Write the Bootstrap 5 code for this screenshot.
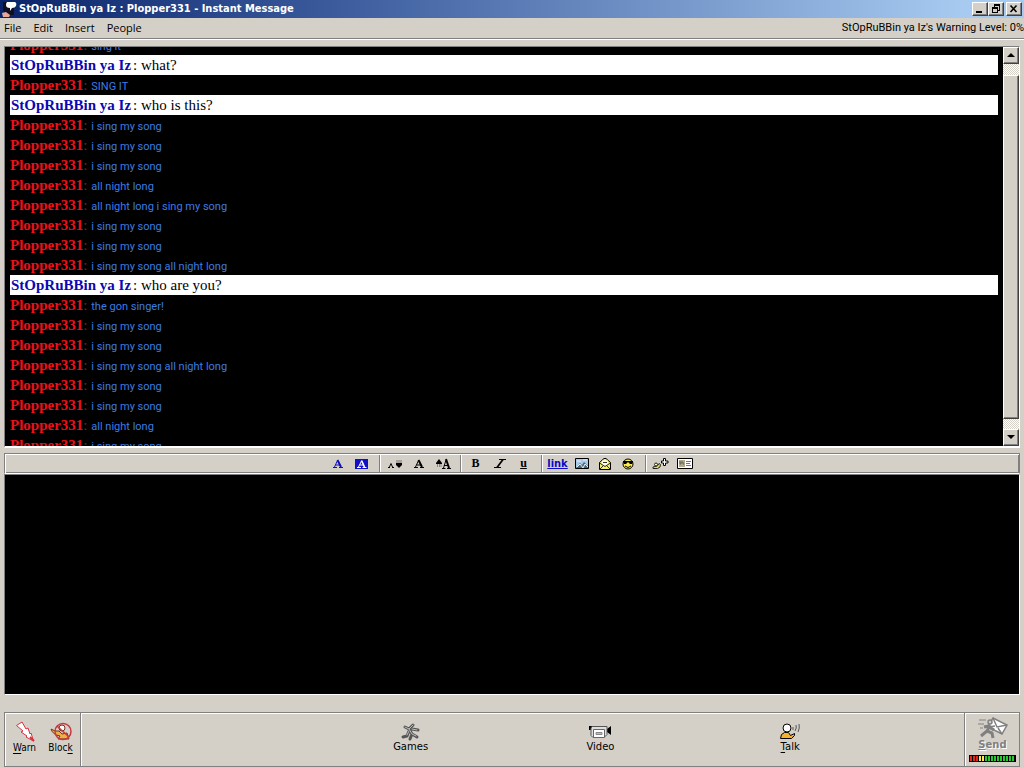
<!DOCTYPE html>
<html lang="en">
<head>
<meta charset="utf-8">
<meta name="viewport" content="width=device-width, initial-scale=1">
<title>StOpRuBBin ya Iz : Plopper331 - Instant Message</title>
<link href="https://cdn.jsdelivr.net/npm/bootstrap@5.3.0/dist/css/bootstrap.min.css" rel="stylesheet">
<style>
  :root { --face: #d4d0c8; --shade: #808080; --ink: #000; }
  body { background: var(--face); color: var(--ink); font: 11px/14px "Open Sans", "Noto Sans", sans-serif; }
  button { background: none; border: 0; padding: 0; color: inherit; font: inherit; }
  svg { display: block; overflow: visible; }
  .titlebar { height: 18px; padding: 0 2px; background: linear-gradient(90deg, #0a246a, #3a5a9c 32%, #a6caf0 94%); color: #fff; }
  .titlebar h1 { margin: 0; padding-left: 3px; font: bold 11px/18px "DejaVu Sans Condensed", "DejaVu Sans", sans-serif; }
  .raised { background: var(--face); border: 1px solid; border-color: #fff #404040 #404040 #fff; box-shadow: inset -1px -1px var(--shade); }
  .winbtn { width: 16px; height: 14px; }
  .winbtn-close { margin-left: 2px; }
  .menubar { height: 21px; border-bottom: 1px solid var(--shade); box-shadow: 0 1px #fff; }
  .menus { gap: 12px; }
  .menubar a { color: inherit; text-decoration: none; }
  .menubar .warning { font-family: Roboto, Arial, sans-serif; }
  .window-body { min-height: 0; }
  .sunken { border: 1px solid; border-color: var(--shade) #fff #fff var(--shade); }
  .history { flex: 404 1 0; min-height: 0; background: #000; margin-top: 7px; border-bottom-width: 2px; }
  .messages { margin-top: -12px; padding: 0 5px; }
  .messages li { height: 20px; font: 15px/20px "Liberation Serif", "Times New Roman", serif; white-space: nowrap; }
  .messages .mine { background: #fff; color: #000; padding-left: 1px; }
  .mine b { color: #0a0ab4; margin-right: 2px; }
  .theirs b { color: #ee1018; }
  .theirs { color: #702020; }
  .theirs span { color: #3c7ce4; font: 11px/20px Roboto, "Noto Sans", sans-serif; }
  .scrollrail { width: 16px; background: repeating-conic-gradient(#fff 0 25%, #d4d0c8 0 50%) 0 0 / 2px 2px; }
  .scrollrail button { height: 17px; }
  .thumb { margin: 11px 0 10px; }
  .tools { height: 21px; margin-top: 5px; padding-right: 2px; border-color: var(--shade) var(--shade) #fff var(--shade); box-shadow: inset 1px 1px #fff, inset -1px -1px var(--shade); }
  .tool { width: 24px; height: 19px; font: bold 12px/19px "Liberation Serif", serif; }
  .tool-narrow { width: 23px; }
  .tool-wide { width: 26px; }
  .linktool { color: #0a0ac8; font: bold 11px/19px "DejaVu Sans Condensed", sans-serif; text-decoration: underline; }
  .rule-v { width: 2px; align-self: stretch; background: linear-gradient(90deg, var(--shade) 50%, #fff 50%); }
  .tools .rule-v { margin: 1px 2px 1px 5px; }
  .compose { flex: 217 1 0; min-height: 0; resize: none; background: #000; color: #3c7ce4; border-radius: 0; outline: 0; }
  .actions { height: 55px; margin: 17px 0 1px; border-color: var(--shade); box-shadow: inset 1px 1px #fff; }
  .services { grid-template-columns: 234fr 190fr 190fr 190fr 79fr; }
  .services button:first-child { grid-column: 2; }
  .moderation { width: 75px; }
  .act { width: 36px; padding-bottom: 4px; font: 10px/12px "DejaVu Sans Condensed", sans-serif; }
  .services .act { width: auto; padding-bottom: 4px; font-family: "DejaVu Sans", sans-serif; }
  .act u { text-underline-offset: 2px; }
  .send { width: 53px; }
  .send button { color: #808080; font: bold 10px/12px "DejaVu Sans", sans-serif; text-shadow: 1px 1px #fff; }
</style>
</head>
<body class="vh-100 d-flex flex-column overflow-hidden">
  <header class="titlebar d-flex align-items-center flex-shrink-0">
    <svg width="14" height="18" viewBox="0 0 14 18"><path d="M1 2H12V15H4L1 10Z" fill="#101020"/><path d="M5 2H13Q15 3 14 6Q13 8 10 8L8 11V8Q4 8 4 5Q4 3 5 2Z" fill="#fff"/><path d="M0 13 4 12 8 15 7 17H1Z" fill="#e8a898"/></svg>
    <h1 class="flex-grow-1 text-nowrap">StOpRuBBin ya Iz : Plopper331 - Instant Message</h1>
    <div class="d-flex">
      <button class="raised winbtn" aria-label="Minimize"><svg width="14" height="12"><path d="M3 8h6v2H3z"/></svg></button>
      <button class="raised winbtn" aria-label="Restore"><svg width="14" height="12" shape-rendering="crispEdges" fill="none" stroke="#000"><path d="M5 1.5h6M5 2.5h6M5.5 2v2M10.500 2v5.500H9M3 4.500h6M3 5.500h6M3.500 5v4.500h5V5"/></svg></button>
      <button class="raised winbtn winbtn-close" aria-label="Close"><svg width="14" height="12"><path d="M3.500 2.500 9.500 9M9.500 2.500 3.500 9" stroke="#000" stroke-width="1.600"/></svg></button>
    </div>
  </header>
  <nav class="menubar d-flex align-items-center flex-shrink-0">
    <div class="menus d-flex flex-grow-1 ps-1">
      <a href="#">File</a><a href="#">Edit</a><a href="#">Insert</a><a href="#">People</a>
    </div>
    <span class="warning text-nowrap">StOpRuBBin ya Iz's Warning Level: 0%</span>
  </nav>
  <main class="window-body d-flex flex-column flex-grow-1 px-1">
    <section class="history sunken d-flex" aria-label="Conversation">
      <div class="flex-grow-1 overflow-hidden">
        <ul class="messages list-unstyled mb-0">
          <li class="theirs"><b>Plopper331</b>: <span>sing it</span></li>
          <li class="mine"><b>StOpRuBBin ya Iz</b>: what?</li>
          <li class="theirs"><b>Plopper331</b>: <span>SING IT</span></li>
          <li class="mine"><b>StOpRuBBin ya Iz</b>: who is this?</li>
          <li class="theirs"><b>Plopper331</b>: <span>i sing my song</span></li>
          <li class="theirs"><b>Plopper331</b>: <span>i sing my song</span></li>
          <li class="theirs"><b>Plopper331</b>: <span>i sing my song</span></li>
          <li class="theirs"><b>Plopper331</b>: <span>all night long</span></li>
          <li class="theirs"><b>Plopper331</b>: <span>all night long i sing my song</span></li>
          <li class="theirs"><b>Plopper331</b>: <span>i sing my song</span></li>
          <li class="theirs"><b>Plopper331</b>: <span>i sing my song</span></li>
          <li class="theirs"><b>Plopper331</b>: <span>i sing my song all night long</span></li>
          <li class="mine"><b>StOpRuBBin ya Iz</b>: who are you?</li>
          <li class="theirs"><b>Plopper331</b>: <span>the gon singer!</span></li>
          <li class="theirs"><b>Plopper331</b>: <span>i sing my song</span></li>
          <li class="theirs"><b>Plopper331</b>: <span>i sing my song</span></li>
          <li class="theirs"><b>Plopper331</b>: <span>i sing my song all night long</span></li>
          <li class="theirs"><b>Plopper331</b>: <span>i sing my song</span></li>
          <li class="theirs"><b>Plopper331</b>: <span>i sing my song</span></li>
          <li class="theirs"><b>Plopper331</b>: <span>all night long</span></li>
          <li class="theirs"><b>Plopper331</b>: <span>i sing my song</span></li>
        </ul>
      </div>
      <div class="scrollrail d-flex flex-column flex-shrink-0">
        <button class="raised" aria-label="Scroll up"><svg width="14" height="15"><path d="M3 9h8L7 5z"/></svg></button>
        <div class="thumb raised flex-grow-1"></div>
        <button class="raised" aria-label="Scroll down"><svg width="14" height="15"><path d="M3 5h8L7 9z"/></svg></button>
      </div>
    </section>
    <div class="tools sunken d-flex justify-content-center flex-shrink-0" role="toolbar" aria-label="Formatting">
      <button class="tool" aria-label="Text color"><svg class="m-auto" width="10" height="10" viewBox="0 0 10 10" fill="none" stroke="#1010b8"><path d="M1.500 8 4.500 1.500M2.500 6h5M0 8.500h4M6 8.500h4"/><path d="M4.500 1 8 8" stroke-width="2"/></svg></button>
      <button class="tool" aria-label="Background color"><svg class="m-auto" width="13" height="10" viewBox="0 0 13 10" fill="none" stroke="#fff"><path d="M0 0h13v10H0z" fill="#1010c8" stroke="none"/><path d="M3.500 8 6.500 2M4.500 6h4M2 8.500h4M7.500 8.500h4"/><path d="M6.500 1.500 9.500 8" stroke-width="1.700"/></svg></button>
      <span class="rule-v"></span>
      <button class="tool" aria-label="Smaller text"><svg class="m-auto" width="14" height="10" viewBox="0 0 14 10" fill="none" stroke="#000"><path d="M1.500 8 3 4.500 4.500 8M0 8.500h2M4 8.500h2"/><path d="M8 4h6v2L11 9 8 6Z" fill="#000" stroke="none"/><path d="M9 1v3M11 1v3M13 1v3" stroke="#777"/></svg></button>
      <button class="tool" aria-label="Normal text"><svg class="m-auto" width="10" height="10" viewBox="0 0 10 10" fill="none" stroke="#000"><path d="M1.500 8 4.500 1.500M2.500 6h5M0 8.500h4M6 8.500h4"/><path d="M4.500 1 8 8" stroke-width="2"/></svg></button>
      <button class="tool" aria-label="Larger text"><svg class="m-auto" width="16" height="12" viewBox="0 0 16 12" fill="none" stroke="#000"><path d="M1 5 4 1 7 5v1H1Z" fill="#000" stroke="none"/><path d="M2.500 6v3M4.500 6v3M6 6v3" stroke="#888"/><path d="M8.500 10 11 2M9 7.500h5M7 10.500h3.500M12 10.500h4"/><path d="M11 1 14 10" stroke-width="2"/></svg></button>
      <span class="rule-v"></span>
      <button class="tool" aria-label="Bold">B</button>
      <button class="tool" aria-label="Italic"><svg class="m-auto" width="12" height="9" viewBox="0 0 12 9" fill="none" stroke="#000"><path d="M5 .5h7M0 8.500h7"/><path d="M9 .5 3 8.500" stroke-width="1.700"/></svg></button>
      <button class="tool text-decoration-underline" aria-label="Underline">u</button>
      <span class="rule-v"></span>
      <button class="tool tool-wide linktool">link</button>
      <button class="tool tool-narrow" aria-label="Insert picture"><svg class="m-auto" width="14" height="11" viewBox="0 0 14 11"><path d="M.5.5h13v10H.5z" fill="#a8cce8" stroke="#000"/><path d="M1 10 5 5l2 2 2-3 4 4v2Z" fill="#486878"/><path d="M2 3h4M8 2h4M2 9l3-3 3 4 2-4 3 3" stroke="#eef" fill="none"/></svg></button>
      <button class="tool tool-narrow" aria-label="Greeting"><svg class="m-auto" width="12" height="12" viewBox="0 0 12 12" stroke="#000"><path d="M.5 4.500 5 .5h2l4.500 4v7H.5Z" fill="#f8f070"/><path d="M3 2.500h6v3L6 8 3 5.500Z" fill="#fff" stroke="none"/><path d="M.5 5 6 8.500 11.500 5M1 11l3-3M11 11 8 8M4 4.500h4" fill="none" stroke-width=".8"/></svg></button>
      <button class="tool tool-narrow" aria-label="Smileys"><svg class="m-auto" width="12" height="12" viewBox="0 0 12 12"><circle cx="6" cy="6" r="5" fill="#f8ec50" stroke="#000"/><path d="M1 3h10v1l-1 2H8L6 4 4 6H2L1 4Z"/><path d="M3 8q3 3 6 0" fill="none" stroke="#000"/></svg></button>
      <span class="rule-v"></span>
      <button class="tool" aria-label="Add buddy"><svg class="m-auto" width="17" height="12" viewBox="0 0 17 12"><path d="M1 10.500q-1-2 2-2 3 0 4-3l1.500 1q.5 3-3 4H1Z" fill="#e8e060" stroke="#222"/><circle cx="4" cy="6.500" r="1.500" fill="#ffc" stroke="#222"/><path d="M11.500.5h2v2.500H16v2h-2.500v2.500h-2V5H9.500V3h2Z" fill="#fff" stroke="#000"/></svg></button>
      <button class="tool" aria-label="Address card"><svg class="m-auto" width="16" height="11" viewBox="0 0 16 11"><path d="M.5.5h15v10H.5z" fill="#fff" stroke="#000"/><path d="M2 2h6v7H2z" fill="#b0a888"/><path d="M3 3v3h1V4h2v2h1" fill="none" stroke="#665"/><path d="M9 3.500h5M9 5.500h4M9 7.500h5" stroke="#777"/></svg></button>
    </div>
    <textarea class="compose sunken" aria-label="Message"></textarea>
    <footer class="actions sunken d-flex flex-shrink-0">
      <div class="moderation d-flex justify-content-center">
        <button class="act"><svg class="mx-auto" width="20" height="20" viewBox="0 0 20 20" fill="#fff" stroke="#d83040" stroke-linejoin="round"><path d="M1.500 3.500 7 0l4 7 2-1 2 6 1-1 2.500 8L11 15l1-1-6-4 2-1Z"/><path d="m15 15 4 4" stroke-width="2"/></svg><u>W</u>arn</button>
        <button class="act"><svg class="mx-auto" width="22" height="20" viewBox="0 0 22 20" stroke="#703020"><path d="M1 7q4 3 8 2l3 3 5-1 2 6H8l2-3Q3 13 1 7Z" fill="#f0b040"/><circle cx="12" cy="6" r="3" fill="#fff"/><g fill="none" stroke="#c83840" stroke-width="1.500"><circle cx="13" cy="9.500" r="8"/><path d="m7 4 12 11"/></g></svg>Bloc<u>k</u></button>
      </div>
      <span class="rule-v"></span>
      <div class="services d-grid flex-grow-1">
        <button class="act"><svg class="mx-auto" width="20" height="18" viewBox="0 0 20 18" fill="none" stroke-linecap="round"><path d="M4 4l4 2 4-4M8 6l3 5 5 3M11 6l6 1M8 8l-2 5-4 1M11 11l-2 5" stroke="#555" stroke-width="3"/><path d="M4 4l4 2 4-4M8 6l3 5 4 2M11 6l5 1M8 8l-2 4" stroke="#bbb"/></svg>Games</button>
        <button class="act"><svg class="mx-auto" width="24" height="18" viewBox="0 0 24 18"><path d="M1 3h3v4H1zM19 6l4-3v9l-4-3Z"/><path d="M4 3.500h15v8l-3 3H5l-2-2V5Z" fill="#ddd" stroke="#555"/><path d="M5.500 6.500h11v8h-11z" fill="#fff" stroke="#666"/><path d="M8 9.500h6v2H8z" fill="#bbb" stroke="#888"/></svg>Video</button>
        <button class="act"><svg class="mx-auto" width="22" height="18" viewBox="0 0 22 18" stroke="#000"><path d="M1.500 15.500q0-5 4-6h4l2 3 4-2v2l-3 3Z" fill="#f4b030"/><circle cx="8" cy="5" r="4" fill="#fff"/><path d="M14 4v3M17 2q1 3-1 6M20 1q1 4-1 8" fill="none" stroke="#555"/></svg><u>T</u>alk</button>
      </div>
      <span class="rule-v"></span>
      <div class="send d-flex flex-column align-items-center">
        <button class="pt-1"><svg class="mx-auto" width="30" height="22" viewBox="0 0 30 22" fill="none" stroke="#808080" stroke-width="1.500"><path d="m15 1 14 7-5 9-14-7Z" fill="#fff"/><path d="m15 1 4 9 10-2M10 10l7-1M24 17l-4-6"/><circle cx="12" cy="5" r="2" fill="#ccc"/><path d="M1 3h7M0 7h6M2 11h3" stroke-width="1"/><path d="m12 8-3 6-6 5M9 14l5 2 1 5M6 10l4-1 6 4" stroke-width="3"/></svg><u>S</u>end</button>
        <svg class="mt-auto mb-1" width="47" height="7" viewBox="0 0 47 7"><path d="M0 0h47v7H0z"/><g fill="none" stroke-width="5" stroke-dasharray="2 1"><path d="M1 3.500h9" stroke="#e02818"/><path d="M10 3.500h6" stroke="#ffe860"/><path d="M16 3.500h30" stroke="#28c830"/></g></svg>
      </div>
    </footer>
  </main>
<script src="https://cdn.jsdelivr.net/npm/bootstrap@5.3.0/dist/js/bootstrap.bundle.min.js"></script>
</body>
</html>
